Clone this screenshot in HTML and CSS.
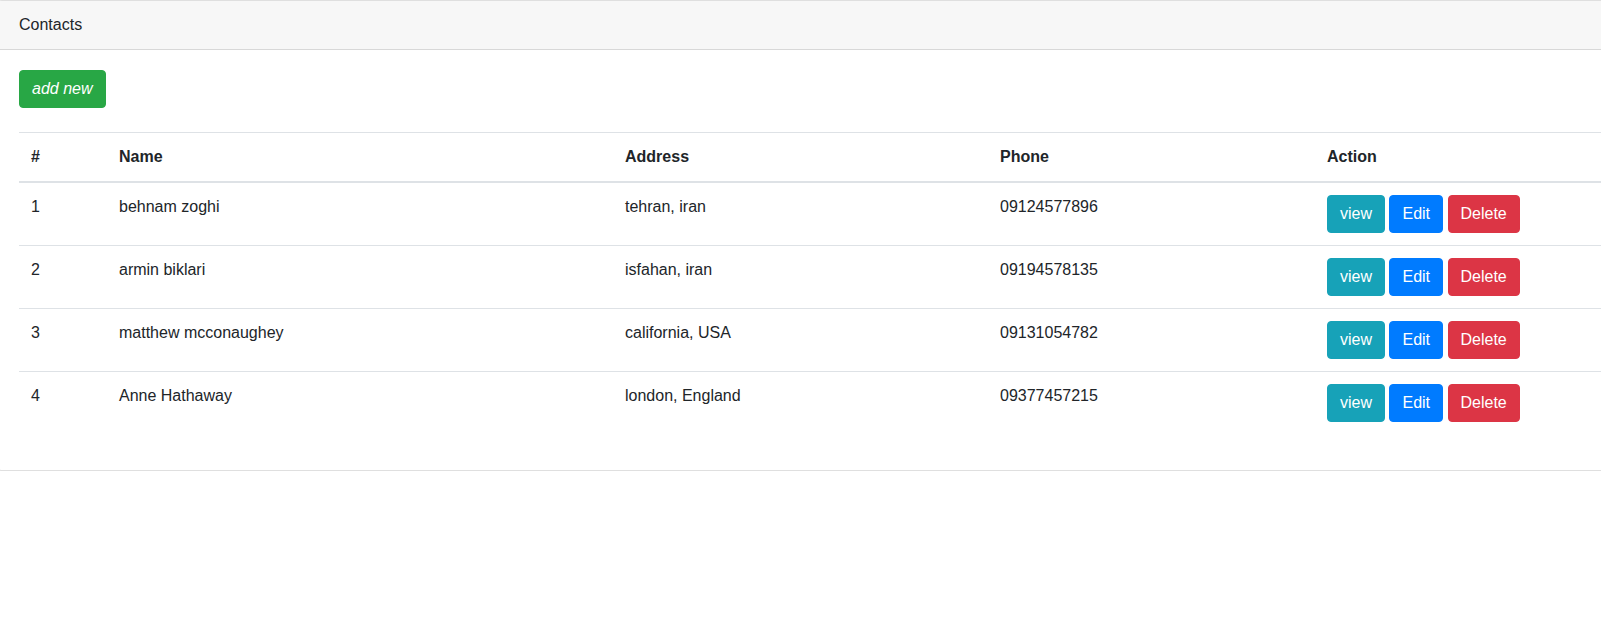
FILE: index.html
```html
<!DOCTYPE html>
<html>
<head>
<meta charset="utf-8">
<link rel="stylesheet" href="styles.css">
</head>
<body>
<div class="card">
  <div class="card-header">Contacts</div>
  <div class="card-body">
    <div class="toolbar"><button class="btn btn-success"><em>add new</em></button></div>
    <table class="table">
      <colgroup>
        <col class="c1"><col class="c2"><col class="c3"><col class="c4"><col class="c5">
      </colgroup>
      <thead>
        <tr><th>#</th><th>Name</th><th>Address</th><th>Phone</th><th>Action</th></tr>
      </thead>
      <tbody>
        <tr><td>1</td><td>behnam zoghi</td><td>tehran, iran</td><td>09124577896</td>
          <td><button class="btn btn-info">view</button> <button class="btn btn-primary">Edit</button> <button class="btn btn-danger">Delete</button></td></tr>
        <tr><td>2</td><td>armin biklari</td><td>isfahan, iran</td><td>09194578135</td>
          <td><button class="btn btn-info">view</button> <button class="btn btn-primary">Edit</button> <button class="btn btn-danger">Delete</button></td></tr>
        <tr><td>3</td><td>matthew mcconaughey</td><td>california, USA</td><td>09131054782</td>
          <td><button class="btn btn-info">view</button> <button class="btn btn-primary">Edit</button> <button class="btn btn-danger">Delete</button></td></tr>
        <tr><td>4</td><td>Anne Hathaway</td><td>london, England</td><td>09377457215</td>
          <td><button class="btn btn-info">view</button> <button class="btn btn-primary">Edit</button> <button class="btn btn-danger">Delete</button></td></tr>
      </tbody>
    </table>
  </div>
</div>
</body>
</html>
```
FILE: styles.css
```css
html, body {
  margin: 0;
  padding: 0;
  background: #fff;
  overflow-x: hidden;
}
body {
  font-family: "Liberation Sans", Arial, sans-serif;
  font-size: 16px;
  line-height: 24px;
  color: #212529;
}
.card {
  margin: 0 -60px 0 -2px;
  border: 1px solid rgba(0,0,0,.125);
  border-radius: 4px;
  background: #fff;
}
.card-header {
  padding: 12px 20px;
  background: #f7f7f7;
  border-bottom: 1px solid rgba(0,0,0,.125);
}
.card-body {
  padding: 20px;
}
.toolbar {
  margin-bottom: 24px;
}
.btn {
  display: inline-block;
  font-family: inherit;
  font-size: 16px;
  line-height: 24px;
  padding: 6px 12px;
  border: 1px solid transparent;
  border-radius: 4px;
  color: #fff;
  cursor: pointer;
  vertical-align: middle;
  margin: 0;
}
.btn em { font-style: italic; }
.btn-success { background: #28a745; border-color: #28a745; }
.btn-info { background: #17a2b8; border-color: #17a2b8; }
.btn-primary { background: #007bff; border-color: #007bff; }
.btn-danger { background: #dc3545; border-color: #dc3545; }
.table {
  width: 100%;
  border-collapse: collapse;
  table-layout: fixed;
  margin-bottom: 16px;
}
.c1 { width: 88px; }
.c2 { width: 506px; }
.c3 { width: 375px; }
.c4 { width: 327px; }
.table th, .table td {
  padding: 12px;
  text-align: left;
  vertical-align: top;
  border-top: 1px solid #dee2e6;
}
.table th {
  font-weight: bold;
}
.table thead th {
  vertical-align: bottom;
  border-bottom: 2px solid #dee2e6;
}
.table tbody tr:first-child td {
  border-top: 0;
}
```
